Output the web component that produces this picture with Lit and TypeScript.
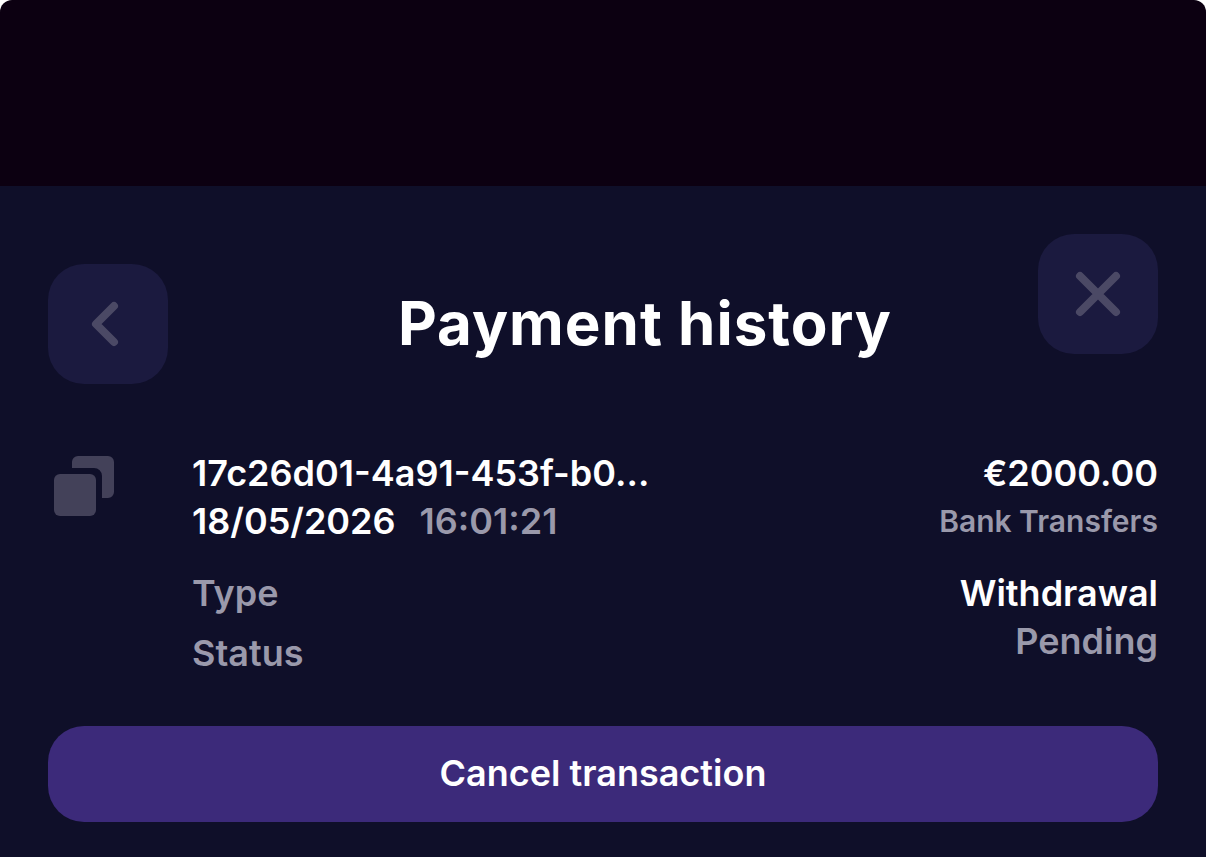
import { LitElement, html, css } from "lit";
import { customElement, property } from "lit/decorators.js";

@customElement("app-root")
export class AppRoot extends LitElement {
  @property() transactionId = "17c26d01-4a91-453f-b0...";

  static styles = css`
    :host {
      display: flex;
      flex-direction: column;
      min-height: 100vh;
      background: #0f0f29;
      color: #ffffff;
      font-family: Inter, sans-serif;
      font-optical-sizing: none;
      font-weight: 600;
      font-size: 36px;
      line-height: 46px;
    }
    * {
      box-sizing: border-box;
      margin: 0;
    }
    .page {
      background: #ffffff;
    }
    .backdrop {
      height: 186px;
      background: #0c0011;
      border-radius: 12px 12px 0 0;
    }
    .panel {
      flex: 1;
      padding: 48px 48px 35px;
    }
    .header {
      display: flex;
      align-items: flex-start;
    }
    button {
      border: 0;
      padding: 0;
      font: inherit;
      color: inherit;
      cursor: pointer;
    }
    .square {
      flex: none;
      width: 120px;
      height: 120px;
      border-radius: 36px;
      background: #1b1a3f;
      color: #4b4965;
    }
    .square svg {
      display: block;
      margin: auto;
    }
    .heading {
      flex: 1;
      display: flex;
      align-items: center;
      padding-top: 30px;
    }
    h1 {
      flex: 1;
      text-align: center;
      font-size: 60px;
      line-height: 72px;
      font-weight: 700;
      letter-spacing: 1px;
      padding: 0 0 2px 84px;
    }
    .details {
      display: flex;
      padding-top: 66px;
    }
    .copy {
      flex: none;
      width: 72px;
      height: 72px;
      margin-right: 72px;
      background: none;
      color: #434159;
    }
    .copy svg {
      display: block;
    }
    .columns {
      flex: 1;
      min-width: 0;
      display: flex;
      justify-content: space-between;
    }
    .columns p {
      padding-bottom: 2px;
    }
    .muted {
      color: #9a99ab;
    }
    .time {
      margin-left: 24px;
    }
    .right {
      text-align: right;
    }
    .method {
      font-size: 30px;
    }
    .row {
      padding-top: 24px;
    }
    .status {
      padding-top: 12px;
    }
    .cancel {
      display: block;
      width: 100%;
      height: 96px;
      margin-top: 48px;
      padding-bottom: 2px;
      border-radius: 36px;
      background: #3c2a7a;
    }
  `;

  render() {
    return html`
      <div class="page"><div class="backdrop"></div></div>
      <main class="panel">
        <header class="header">
          <div class="heading">
            <button class="square" aria-label="Back">
              <svg width="60" height="60" viewBox="0 0 60 60" fill="none" stroke="currentColor" stroke-width="8" stroke-linecap="round" stroke-linejoin="round">
                <path d="M36 12 18 30 36 48" />
              </svg>
            </button>
            <h1>Payment history</h1>
          </div>
          <button class="square" aria-label="Close">
            <svg width="60" height="60" viewBox="0 0 60 60" fill="none" stroke="currentColor" stroke-width="8" stroke-linecap="round">
              <path d="M12 12 48 48M48 12 12 48" />
            </svg>
          </button>
        </header>
        <section class="details">
          <button class="copy" aria-label="Copy transaction id">
            <svg width="72" height="72" viewBox="0 0 72 72" fill="currentColor">
              <rect x="6" y="24" width="42" height="42" rx="6" />
              <path d="M24 18V12a6 6 0 0 1 6-6H60a6 6 0 0 1 6 6V42a6 6 0 0 1-6 6H54V26a8 8 0 0 0-8-8Z" />
            </svg>
          </button>
          <div class="columns">
            <div>
              <p>${this.transactionId}</p>
              <p>18/05/2026<span class="time muted">16:01:21</span></p>
              <p class="row muted">Type</p>
              <p class="status muted">Status</p>
            </div>
            <div class="right">
              <p>€2000.00</p>
              <p class="method muted">Bank Transfers</p>
              <p class="row">Withdrawal</p>
              <p class="muted">Pending</p>
            </div>
          </div>
        </section>
        <button class="cancel">Cancel transaction</button>
      </main>
    `;
  }
}
